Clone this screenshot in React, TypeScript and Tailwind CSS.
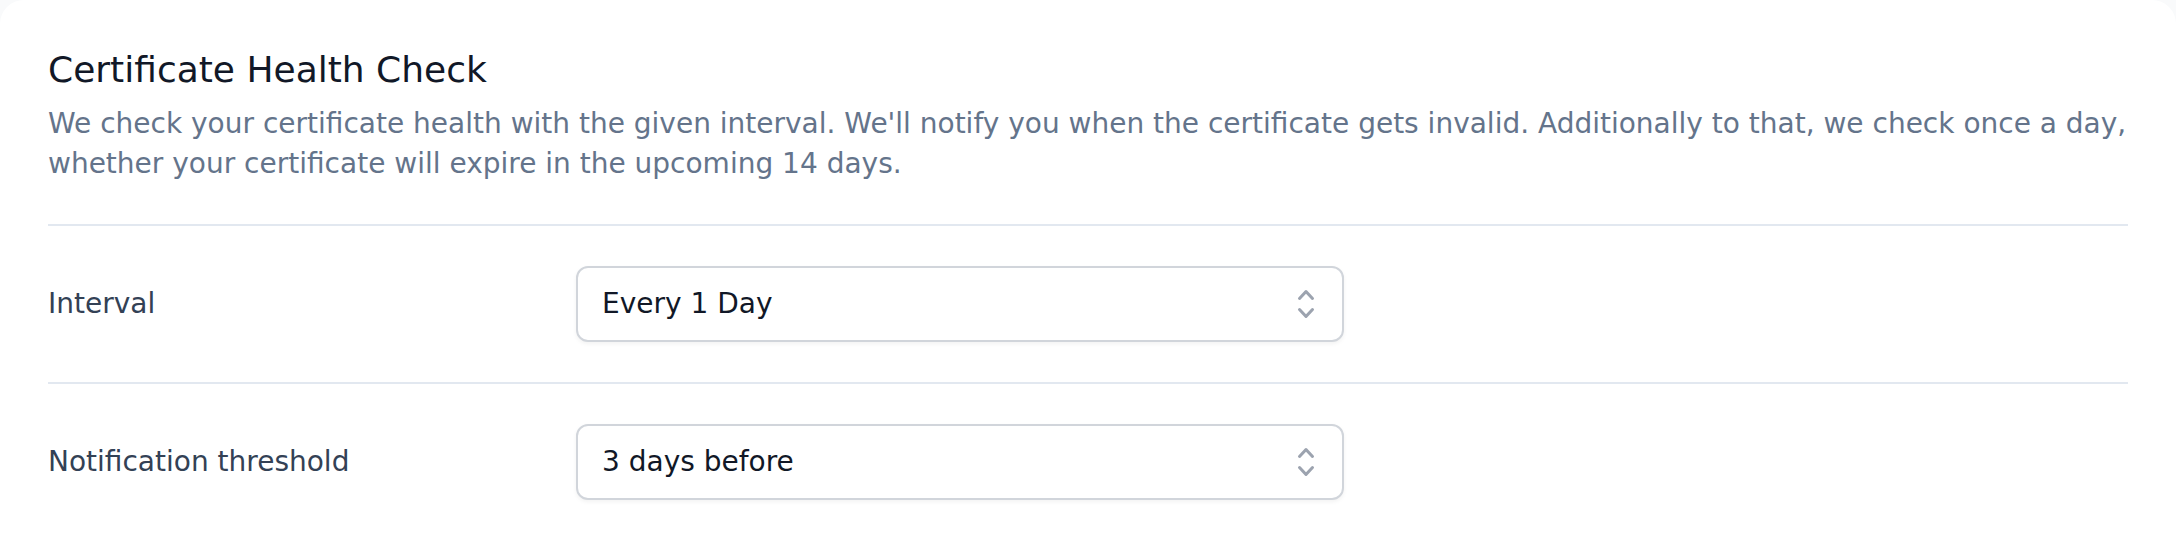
import React from "react";

function ChevronUpDown() {
  return (
    <svg viewBox="0 0 20 20" fill="currentColor" className="w-[40px] h-[40px] text-[#9ca3af]" aria-hidden="true">
      <path
        fillRule="evenodd"
        d="M10 3a.75.75 0 01.55.24l3.25 3.5a.75.75 0 11-1.1 1.02L10 4.852 7.3 7.76a.75.75 0 01-1.1-1.02l3.25-3.5A.75.75 0 0110 3zm-3.76 9.2a.75.75 0 011.06.04l2.7 2.908 2.7-2.908a.75.75 0 111.1 1.02l-3.25 3.5a.75.75 0 01-1.1 0l-3.25-3.5a.75.75 0 01.04-1.06z"
        clipRule="evenodd"
      />
    </svg>
  );
}

function Row({ label, value, last }: { label: string; value: string; last?: boolean }) {
  return (
    <div className={"flex items-center py-[40px] " + (last ? "" : "border-b-2 border-[#e2e8f0]")}>
      <div className="w-[528px] text-[28px] leading-[40px] text-[#334155]">{label}</div>
      <button
        type="button"
        className="flex items-center justify-between w-[768px] h-[76px] pl-[24px] pr-[16px] border-2 border-[#d1d5db] rounded-[12px] bg-white shadow-[0_2px_4px_rgba(0,0,0,0.05)] text-left"
      >
        <span className="text-[28px] leading-[40px] text-[#111827]">{value}</span>
        <ChevronUpDown />
      </button>
    </div>
  );
}

export default function App() {
  return (
    <div
      className="min-h-[548px] bg-[#f9fafb]"
      style={{ fontFamily: '"DejaVu Sans", "Liberation Sans", sans-serif' }}
    >
      <div className="bg-white rounded-t-[24px] px-[48px] pt-[48px] pb-[48px]">
        <h2 className="text-[36px] leading-[44px] font-normal text-[#111827]">Certificate Health Check</h2>
        <p className="mt-[12px] text-[28px] leading-[40px] text-[#64748b]">
          We check your certificate health with the given interval. We'll notify you when the certificate gets invalid. Additionally to that, we check once a day, whether your certificate will expire in the upcoming 14 days.
        </p>
        <div className="mt-[40px] border-t-2 border-[#e2e8f0]">
          <Row label="Interval" value="Every 1 Day" />
          <Row label="Notification threshold" value="3 days before" last />
        </div>
      </div>
    </div>
  );
}
